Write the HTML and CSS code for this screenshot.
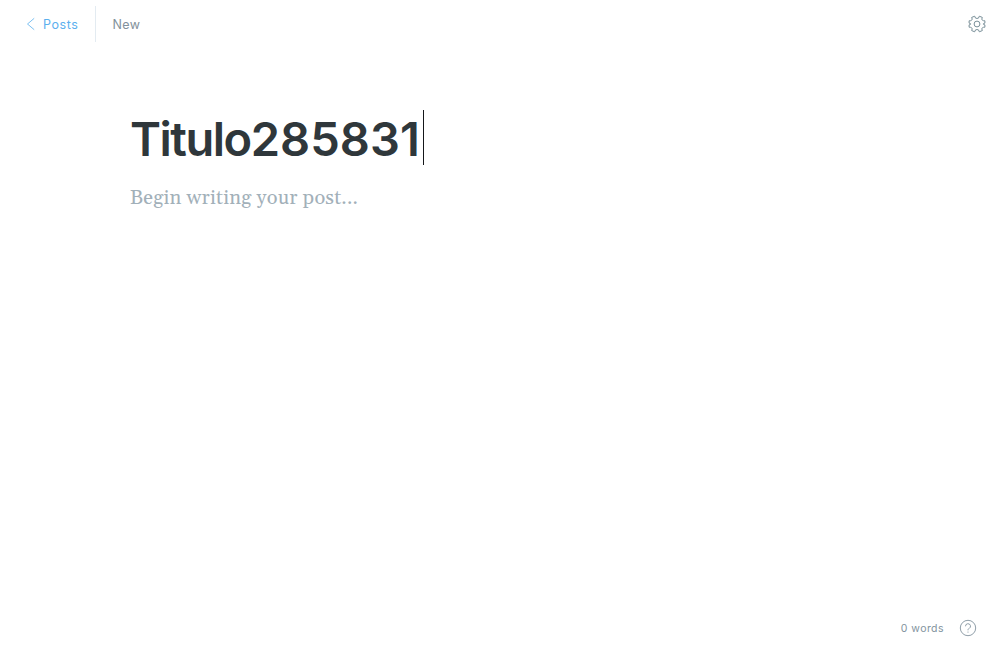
FILE: index.html
```html
<!DOCTYPE html>
<html lang="en">
<head>
<meta charset="utf-8">
<title>New post</title>
<link rel="stylesheet" href="styles.css">
</head>
<body>
<div class="editor">
  <header class="topbar">
    <a class="back"><svg class="chevron" viewBox="0 0 9 14"><path d="M8.200 1.300 1.500 7l6.700 5.700"/></svg><span>Posts</span></a>
    <span class="status">New</span>
    <svg class="gear" viewBox="-9 -9 18 18"><path d="M-1.500-5.900Q0-5.200 1.500-5.900L2.300-7.800 5.300-6.600 4.800-4.800Q5.200-3.500 6.400-3.300L7.900-3.200V-.9L6.400-.3V.3L7.900.9V3.200L6.400 3.300Q5.200 3.500 4.800 4.800L5.300 6.600 2.300 7.800 1.500 5.900Q0 5.200-1.500 5.900L-2.300 7.800-5.300 6.600-4.800 4.800Q-5.200 3.500-6.400 3.300L-7.900 3.200V.9L-6.400.3V-.3L-7.900-.9V-3.200L-6.400-3.300Q-5.200-3.500-4.800-4.800L-5.300-6.600-2.300-7.800Z"/><circle r="2.900"/></svg>
  </header>
  <main class="content">
    <div class="title"><h1><span class="word">Titulo</span>285831</h1><i class="caret"></i></div>
    <p class="placeholder">Begin writing your post...</p>
  </main>
  <footer class="footer">
    <span>0 words</span>
    <svg class="help" viewBox="0 0 18 18"><circle cx="9" cy="9" r="7.700"/><path d="M6.500 7.300a2.500 2.500 0 1 1 3.700 2.100C9.300 9.900 9 10.200 9 11.300"/><circle class="dot" cx="9" cy="13" r=".6"/></svg>
  </footer>
</div>
</body>
</html>
```
FILE: styles.css
```css
* { box-sizing: border-box; }
body { margin: 0; background: #fff; font-family: Inter, sans-serif; }
svg { fill: none; stroke: currentColor; flex: none; }
.editor { height: 660px; display: flex; flex-direction: column; }
.topbar { height: 48px; display: flex; align-items: center; padding: 0 14px 0 26px; font-size: 12.5px; letter-spacing: .55px; color: #82919b; }
.back { width: 70px; height: 36px; display: flex; align-items: center; gap: 8px; border-right: 1px solid #e3ebf1; color: #5bb0ee; }
.chevron { width: 9px; height: 14px; stroke-width: .8; }
.status { padding-left: 16.5px; letter-spacing: .4px; }
.gear { width: 18px; height: 18px; margin-left: auto; stroke-width: .95; color: #738a94; }
.content { flex: 1; padding: 62px 130px 0; }
.title { display: flex; align-items: flex-start; }
h1 { width: 293px; height: 55px; margin: 0; padding-top: 1px; font-size: 47px; line-height: 55px; font-weight: 600; letter-spacing: .1px; white-space: nowrap; color: #2f373b; }
.word { letter-spacing: -1.5px; }
.caret { width: 1px; height: 55px; background: #15171a; }
.placeholder { margin: 17px 0 0; font: 20px/32px Gelasio, "Liberation Serif", serif; letter-spacing: .2px; color: #a2b0b9; }
.footer { height: 64px; display: flex; align-items: center; justify-content: flex-end; gap: 15px; padding-right: 23px; font-size: 10.5px; letter-spacing: .45px; color: #82939e; }
.help { width: 18px; height: 18px; stroke-width: .9; }
.dot { fill: currentColor; stroke: none; }
```
